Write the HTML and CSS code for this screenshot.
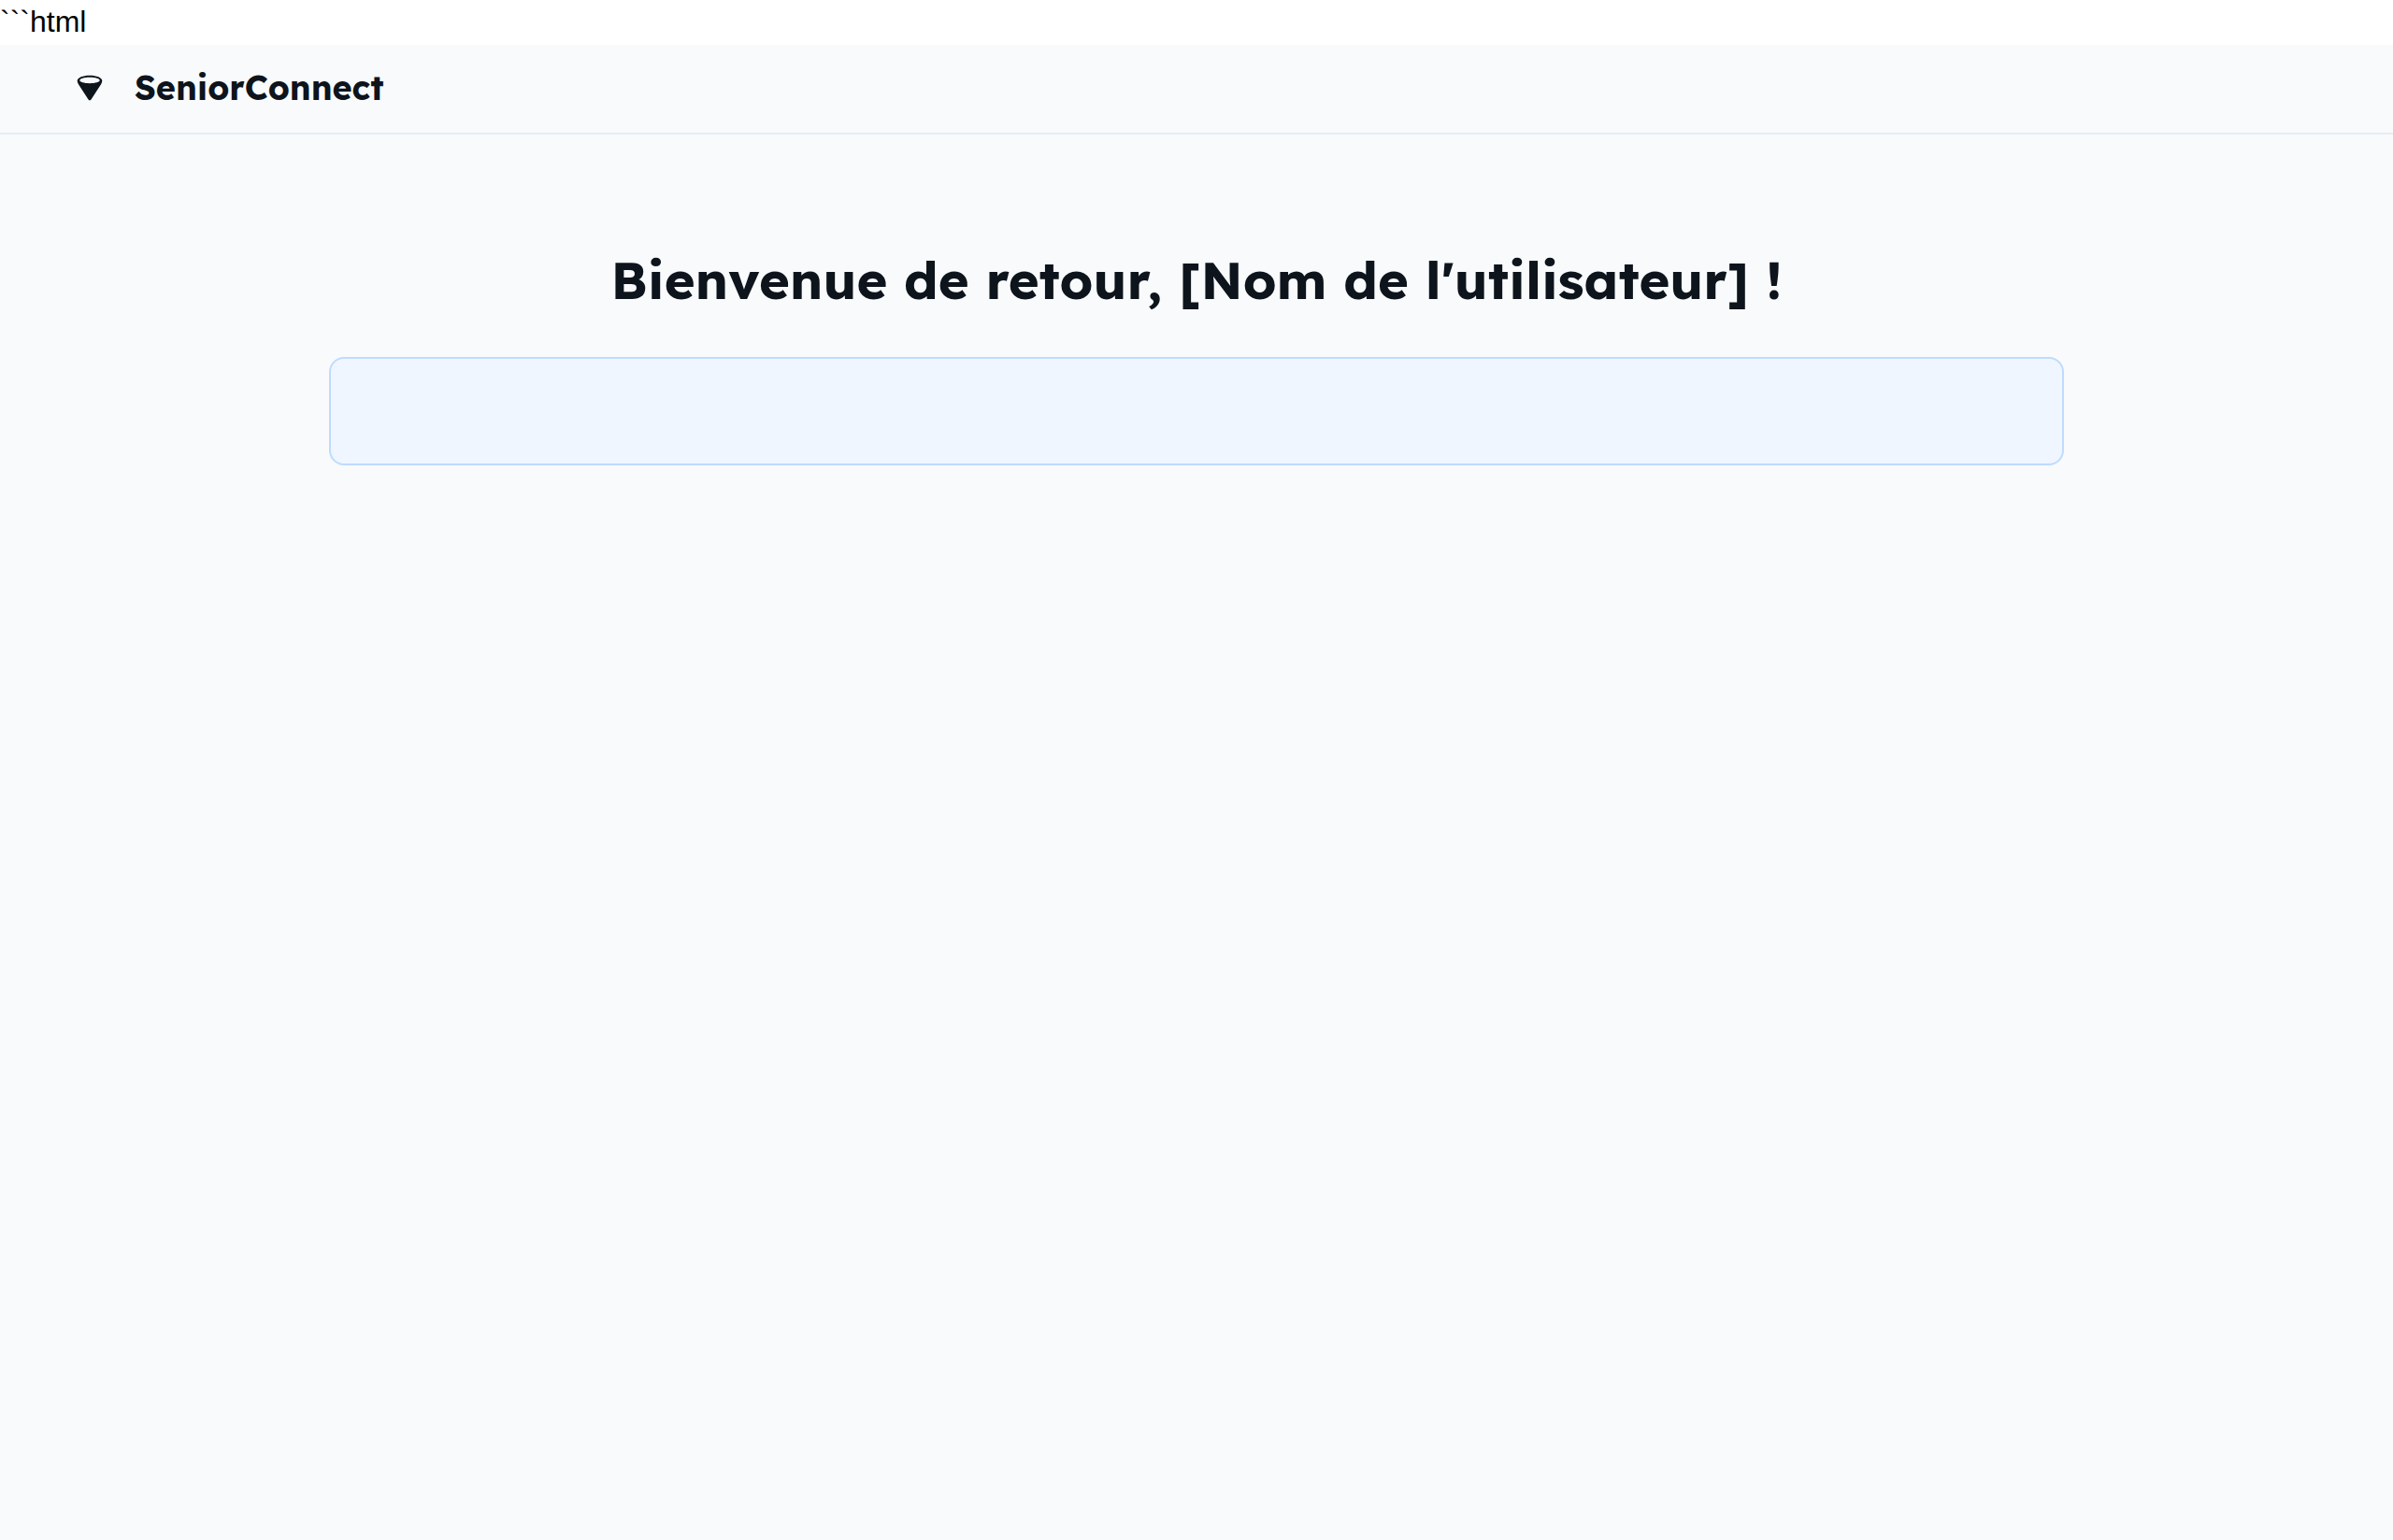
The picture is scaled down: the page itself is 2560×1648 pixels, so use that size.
FILE: index.html
```html
<!DOCTYPE html>
<html lang="fr">
<head>
  <meta charset="utf-8">
  <title>SeniorConnect</title>
  <link rel="stylesheet" href="styles.css">
</head>
<body>
  <p class="prelude">```html</p>
  <div class="page">
    <header class="header">
      <svg class="logo" viewBox="0 0 48 48" aria-hidden="true">
        <path fill="currentColor" fill-rule="evenodd" d="M24 4C35 4 44 7.6 44 12.5C44 14.3 43.3 16.2 42.3 18L26.2 42.7C25.2 44.4 22.8 44.4 21.8 42.7L5.7 18C4.7 16.2 4 14.3 4 12.5C4 7.6 13 4 24 4ZM24 7.3C15 7.3 8 9.3 8 12C8 14.7 15 16.7 24 16.7C33 16.7 40 14.7 40 12C40 9.3 33 7.3 24 7.3Z"/>
      </svg>
      <h2 class="brand">SeniorConnect</h2>
    </header>
    <main class="content">
      <h1 class="title">Bienvenue de retour, [Nom de l'utilisateur] !</h1>
      <section class="card" aria-label="Informations"></section>
    </main>
  </div>
</body>
</html>
```
FILE: styles.css
```css
* {
  box-sizing: border-box;
}

body {
  display: flex;
  flex-direction: column;
  min-height: 100vh;
  margin: 0;
  background: #fff;
  color: #000;
  font-family: "Liberation Sans", Arial, sans-serif;
}

.prelude {
  margin: 0;
  padding-bottom: 2px;
  font-size: 32px;
  line-height: 46px;
}

.page {
  flex: 1;
  background: #f8fafc;
  color: #0d141c;
  font-family: Lexend, Inter, sans-serif;
}

.header {
  display: flex;
  align-items: center;
  gap: 32px;
  padding: 24px 80px 26px;
  border-bottom: 2px solid #e7edf4;
}

.logo {
  width: 32px;
  height: 32px;
}

.brand {
  margin: 0;
  font-size: 36px;
  font-weight: 700;
  line-height: 44px;
}

.content {
  max-width: 1920px;
  margin: 0 auto;
  padding: 120px 32px 40px;
}

.title {
  margin: 0 0 48px;
  font-size: 56px;
  font-weight: 700;
  line-height: 70px;
  text-align: center;
}

.card {
  padding: 56px;
  border: 2px solid #bfdbfe;
  border-radius: 16px;
  background: #eff6ff;
}
```
